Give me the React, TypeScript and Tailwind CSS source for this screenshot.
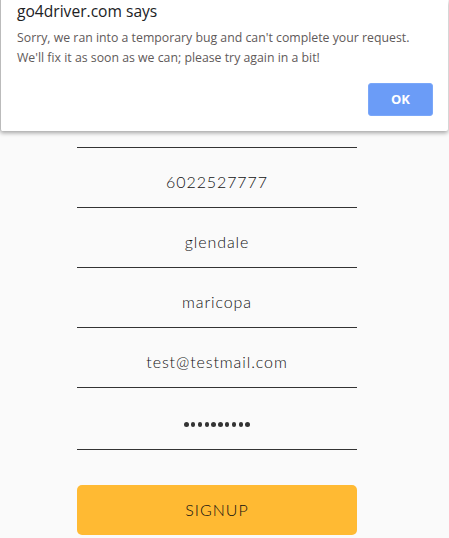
import React from "react";

const fields = ["6022527777", "glendale", "maricopa", "test@testmail.com"];

export default function App() {
  return (
    <div className="relative min-h-[538px] w-full overflow-hidden bg-[#fafafa]" style={{ fontFamily: "Lato, 'Open Sans', sans-serif" }}>
      <main className="pl-[77px] pt-[147px]">
        <form className="w-[280px]" onSubmit={(e) => e.preventDefault()}>
          <div className="border-t border-[#333]" />
          {fields.map((f) => (
            <div key={f} className="flex h-[60px] items-start justify-center border-b border-[#333] pt-[24px]">
              <span className="text-[16px] font-light leading-[20px] tracking-[0.9px] text-[#111]">{f}</span>
            </div>
          ))}
          <div className="flex h-[62px] items-start justify-center gap-[2.3px] border-b border-[#333] pt-[34px]">
            {Array.from({ length: 10 }).map((_, i) => (
              <span key={i} className="h-[4.5px] w-[4.5px] rounded-full bg-[#333]" />
            ))}
          </div>
          <button
            type="submit"
            className="mt-[35px] flex h-[50px] w-full items-center justify-center rounded-[5px] bg-[#ffba33] text-[16px] font-light tracking-[1px] text-[#111]"
          >
            SIGNUP
          </button>
        </form>
      </main>

      <div
        className="absolute left-0 top-0 h-[131px] w-[448px] rounded-b-[2px] border-l border-[#bbb] bg-white shadow-[0_2px_4px_rgba(0,0,0,0.35)]"
        style={{ fontFamily: "'Open Sans', 'Noto Sans', sans-serif" }}
      >
        <div className="px-4 pt-[1px] text-[15.6px] leading-[20px] text-[#202124]">go4driver.com says</div>
        <div className="mt-[7px] px-4 text-[12.3px] leading-[20px] text-[#5f5a5a]">
          <p>Sorry, we ran into a temporary bug and can't complete your request.</p>
          <p>We'll fix it as soon as we can; please try again in a bit!</p>
        </div>
        <div className="flex justify-end pr-[15px] pt-[15px]">
          <button className="h-[33px] w-[65px] rounded-[3px] border border-[#7aa7f9] bg-[#6b9cf7] text-[13px] font-bold text-white">
            OK
          </button>
        </div>
      </div>
    </div>
  );
}
